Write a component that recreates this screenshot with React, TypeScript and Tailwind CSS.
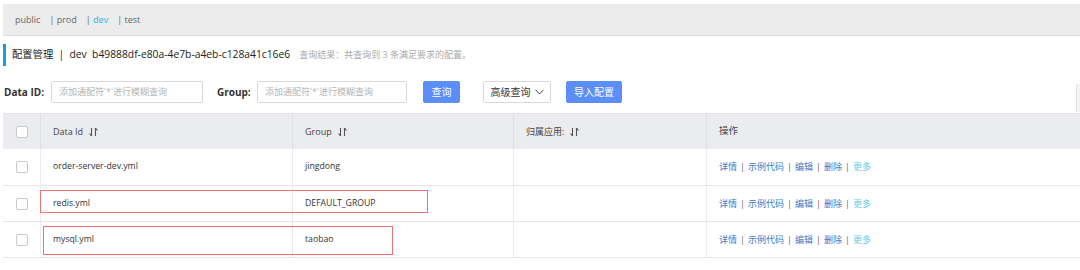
import React from "react";

const FONT = { fontFamily: '"Open Sans", "Noto Sans CJK SC", sans-serif' };

interface Row {
  dataId: string;
  group: string;
}

const ROWS: Row[] = [
  { dataId: "order-server-dev.yml", group: "jingdong" },
  { dataId: "redis.yml", group: "DEFAULT_GROUP" },
  { dataId: "mysql.yml", group: "taobao" },
];

const COLS = "grid grid-cols-[38px_252px_221px_193px_1fr]";

function SortIcon() {
  return (
    <svg width="9" height="10" viewBox="0 0 9 10" className="ml-1.5 inline-block">
      <path d="M2.5 1v8M2.5 9L0.5 6.5" stroke="#555" strokeWidth="1.1" fill="none" />
      <path d="M6.5 9V1M6.5 1l2 2.5" stroke="#555" strokeWidth="1.1" fill="none" />
    </svg>
  );
}

function Checkbox() {
  return <div className="w-[12px] h-[12px] rounded-[2px] border border-[#c9c9c9] bg-white" />;
}

function Actions() {
  const links = ["详情", "示例代码", "编辑", "删除"];
  return (
    <div className="flex items-center text-[9px]">
      {links.map((l) => (
        <React.Fragment key={l}>
          <span className="text-[#3c78c8]">{l}</span>
          <span className="mx-[3px] text-[#666]">|</span>
        </React.Fragment>
      ))}
      <span className="text-[#5fcbe9]">更多</span>
    </div>
  );
}

function Input() {
  return (
    <div className="h-[22px] border border-[#d9d9d9] rounded-[2px] flex items-center px-[7px] text-[9px] text-[#b5b5b5]">
      添加通配符'*'进行模糊查询
    </div>
  );
}

export default function App() {
  return (
    <div className="w-[1080px] h-[270px] bg-white overflow-hidden text-[#333]" style={FONT}>
      {/* namespace tabs */}
      <div className="mt-[4px] ml-[3px] h-[32px] bg-[#ececec] border-b border-[#dcdcdc] flex items-center pl-[12px] text-[9px] text-[#666] gap-[9px]">
        <span>public</span>
        <span>| prod</span>
        <span>
          | <span className="text-[#2eb6e8]">dev</span>
        </span>
        <span>| test</span>
      </div>

      {/* title */}
      <div className="mt-[8px] ml-[3px] h-[22px] border-l-[3px] border-[#1a9de0] pl-[6px] flex items-center">
        <span className="text-[10.3px] text-[#222]">配置管理 &nbsp;|&nbsp; dev &nbsp;b49888df-e80a-4e7b-a4eb-c128a41c16e6</span>
        <span className="ml-[9px] text-[9px] text-[#aaa]">查询结果：共查询到 3 条满足要求的配置。</span>
      </div>

      {/* search */}
      <div className="mt-[15px] h-[22px] flex items-center pl-[4px]">
        <span className="text-[10px] font-bold text-[#333] w-[47px]">Data ID:</span>
        <div className="w-[152px]">
          <Input />
        </div>
        <span className="ml-[14px] text-[10px] font-bold text-[#333] w-[40px]">Group:</span>
        <div className="w-[150px]">
          <Input />
        </div>
        <div className="ml-[16px] w-[37px] h-[22px] rounded-[2px] bg-[#5b8ef7] text-white text-[10px] flex items-center justify-center">
          查询
        </div>
        <div className="ml-[23px] w-[68px] h-[22px] rounded-[2px] border border-[#d9d9d9] text-[10px] text-[#333] flex items-center justify-center gap-[4px]">
          高级查询
          <svg width="9" height="6" viewBox="0 0 9 6">
            <path d="M0.5 0.8L4.5 5L8.5 0.8" stroke="#444" strokeWidth="1" fill="none" />
          </svg>
        </div>
        <div className="ml-[15px] w-[56px] h-[22px] rounded-[2px] bg-[#5b8ef7] text-white text-[10px] flex items-center justify-center">
          导入配置
        </div>
        <div className="ml-auto self-start mt-[3px] w-[4px] h-[28px] bg-[#f3f3f3] border-l border-[#e2e2e2]" />
      </div>

      {/* table */}
      <div className="relative mt-[10px] ml-[3px] border-b border-[#e6e6e6]">
        <div className={`${COLS} h-[36px] bg-[#ebecf0] text-[9px] text-[#444] border-t border-[#e4e4e4]`}>
          <div className="flex items-center pl-[13px] border-r border-[#e0e0e0]">
            <Checkbox />
          </div>
          <div className="flex items-center pl-[12px] border-r border-[#e0e0e0]">
            Data Id
            <SortIcon />
          </div>
          <div className="flex items-center pl-[12px] border-r border-[#e0e0e0]">
            Group
            <SortIcon />
          </div>
          <div className="flex items-center pl-[12px] border-r border-[#e0e0e0]">
            归属应用:
            <SortIcon />
          </div>
          <div className="flex items-center pl-[12px] text-[9.5px]">操作</div>
        </div>
        {ROWS.map((r, i) => (
          <div
            key={r.dataId}
            className={`${COLS} h-[36px] text-[8.7px] text-[#333] ${i > 0 ? "border-t border-[#e6e6e6]" : ""}`}
          >
            <div className="flex items-center pl-[13px] border-r border-[#ececec]">
              <Checkbox />
            </div>
            <div className="flex items-center pl-[12px] border-r border-[#ececec]">{r.dataId}</div>
            <div className="flex items-center pl-[12px] border-r border-[#ececec]">{r.group}</div>
            <div className="border-r border-[#ececec]" />
            <div className="flex items-center pl-[12px]">
              <Actions />
            </div>
          </div>
        ))}

        {/* annotation boxes */}
        <div className="absolute left-[37px] top-[77px] w-[388px] h-[23px] border border-[#ef6f6f]" />
        <div className="absolute left-[40px] top-[113px] w-[350px] h-[29px] border border-[#ef6f6f]" />
      </div>
    </div>
  );
}
